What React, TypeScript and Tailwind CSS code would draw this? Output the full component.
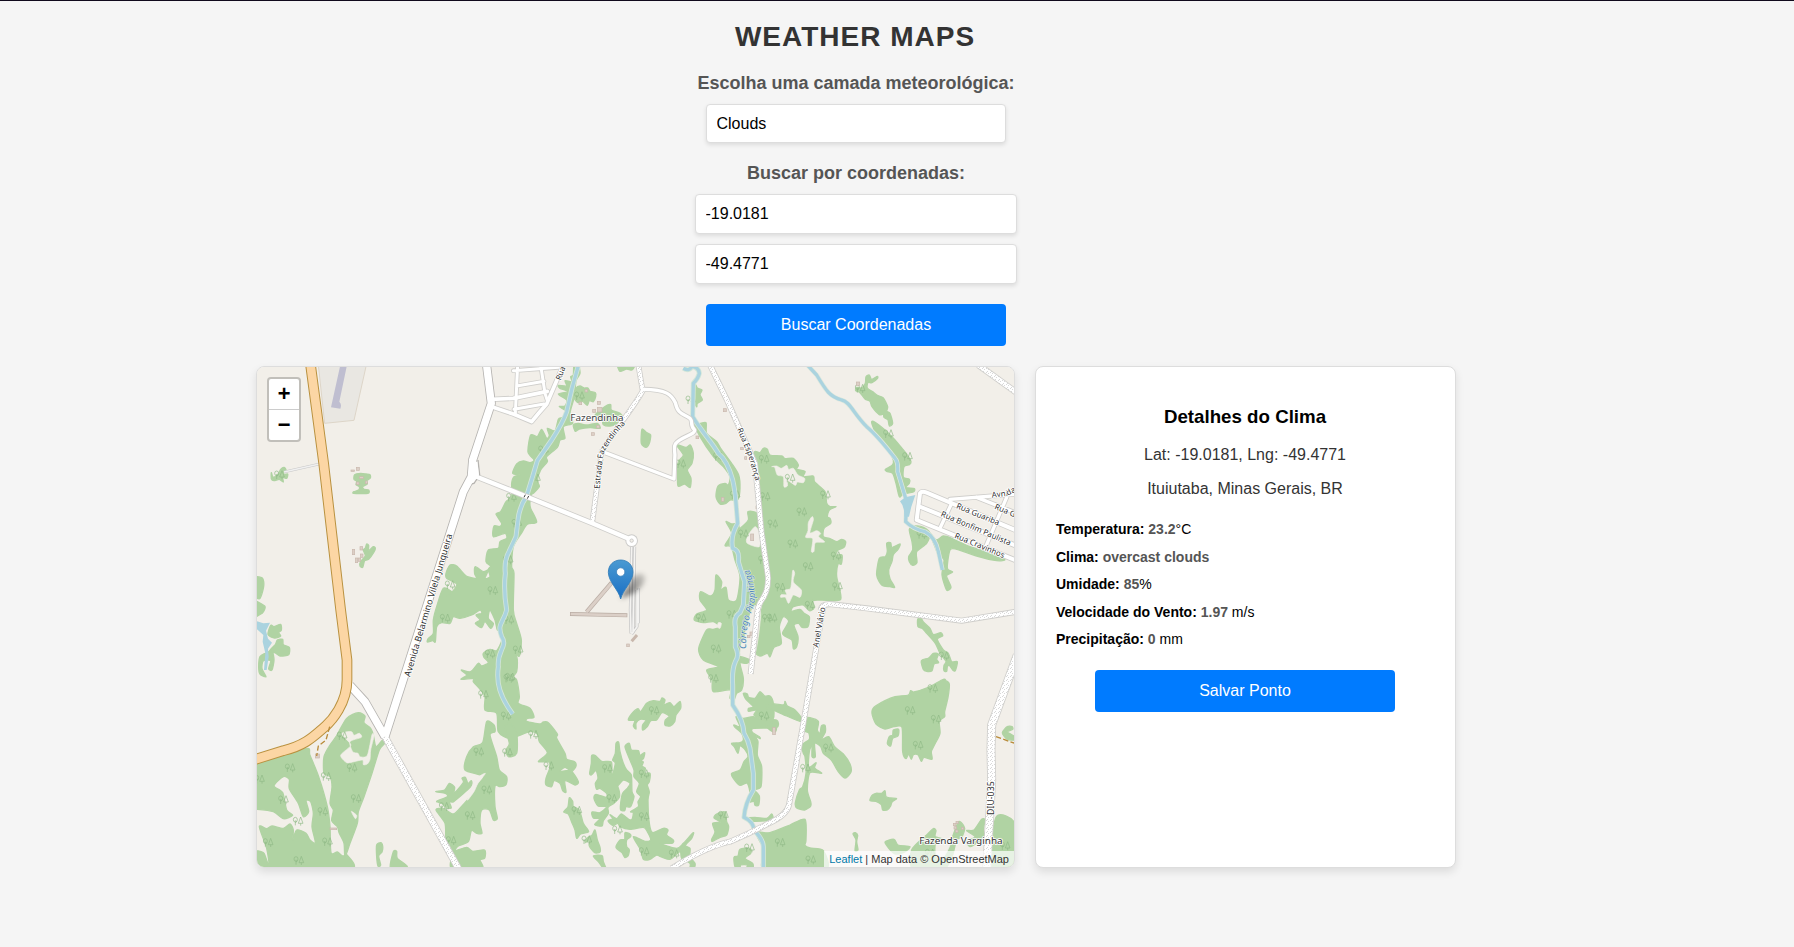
import React, { useState } from "react";

type Tile = { dx: number; dy: number; woods: string[]; gaps?: string[]; trees: string; houses?: string };

const TILES: Tile[] = [
  {
    dx: 0,
    dy: 0,
    woods: [
      "64,338 68,350 76,350 86,340 92,328 102,322 108,330 98,344 113,342 110,355 98,352 100,366 88,358 72,362 64,356",
      "314,344 332,340 348,342 360,344 361,354 350,362 352,372 338,380 342,388 356,390 354,400 311,400 312,395 326,390 328,380 318,374 320,364 312,358",
      "350,552 356,556 356,572 370,560 376,564 372,576 356,598 344,602 338,622 330,618 332,604 346,588 340,570 346,564",
      "10,655 35,653 41,665 40,685 30,715 22,715 10,720",
      "10,720 22,725 44,738 44,748 36,760 10,770",
    ],
    trees: "600,675 728,692 88,345",
    houses: "303,330,10,4 319,322,9,9 328,350,12,6 319,366,8,8 346,363,6,8 307,568,7,16 330,560,8,10 331,582,8,10 316,594,7,14 325,594,7,10",
  },
  {
    dx: 780,
    dy: 0,
    woods: [
      "325,14 372,14 366,30 350,27 330,34",
      "198,85 210,78 222,84 234,84 240,94 256,98 257,110 250,125 238,122 232,136 218,124 204,128 192,112",
      "190,195 205,190 230,195 262,190 270,205 240,203 208,207 196,214",
      "285,140 302,134 304,150 330,160 340,176 322,190 300,198 280,194 276,180 254,168",
      "396,208 410,218 422,225 418,250 408,262 394,250",
      "500,255 528,262 541,255 550,280 546,310 532,330 543,355 540,383 524,372 504,378 503,340 505,305 520,285",
      "556,75 562,84 576,90 570,104 577,120 562,130 560,140 552,120",
      "550,185 565,192 588,188 590,220 620,245 632,265 665,310 686,345 690,385 684,418 660,420 648,430 630,432 618,410 624,378 645,370 655,375 660,350 640,320 610,290 570,230",
      "648,485 665,492 684,490 690,505 715,480 714,455 745,465 750,550 765,620 774,695 750,722 735,750 718,760 722,800 705,830 690,855 690,910 700,955 695,990 680,1000 672,1020 660,1015 660,990 610,995 606,960 590,930 625,920 580,900 566,866 590,810 610,808 630,800 610,785 580,788 553,780 560,762 590,750 570,720 572,695 602,708 615,690 618,645 635,665 632,690 648,682 655,720 680,720 690,650 675,600 664,560 645,556 665,520",
    ],
    gaps: ["712,530 735,500 748,520 748,560 712,550", "730,740 705,830 735,880 752,760", "622,800 625,788 634,790 630,805"],
    trees: "100,270 20,490 208,108 76,355 512,312 625,290 675,405 762,298 765,410 700,522 760,600 -6,600 542,120 712,690 4,412",
    houses: "225,88,8,8 207,126,8,8 262,124,9,9 248,148,9,9 262,142,14,14 260,196,8,8 244,218,9,8 640,146,9,9 558,228,8,8 692,262,8,7 704,290,6,8 634,412,8,12 722,522,9,20 738,438,6,8",
  },
  {
    dx: 1560,
    dy: 0,
    woods: [
      "288,50 298,45 305,58 322,49 322,56 306,68 294,68 292,84 312,98 322,106 340,114 353,140 350,154 360,160 368,190 358,198 354,180 342,172 340,162 328,164 306,140 300,124 285,117 270,98 257,92 260,82 275,84 286,70",
      "305,188 314,186 345,210 375,240 396,265 412,285 423,305 418,314 402,320 400,352 418,358 418,370 408,382 433,386 430,396 400,402 388,410 378,370 368,340 350,334 346,328 366,316 370,300 350,265 322,230",
      "-48,280 -30,278 -20,265 -8,268 0,285 35,288 45,296 70,295 85,315 80,328 105,334 100,350 130,348 134,366 165,395 170,430 180,440 198,440 178,450 172,470 180,475 182,490 162,505 160,530 178,535 200,545 215,538 227,545 222,562 204,570 198,585 216,585 214,612 204,612 200,650 212,718 155,720 128,722 132,744 118,752 100,735 70,740 64,754 90,748 102,760 118,770 114,800 96,802 86,790 72,796 84,830 80,860 70,866 66,840 44,828 38,818 56,784 40,770 28,800 34,850 12,862 0,890 -8,880 -30,888 -46,870 -38,800 -16,710 -10,600 -24,500 -34,380",
      "350,550 362,548 366,562 390,552 384,568 370,584 366,604 356,630 360,656 374,682 360,680 336,676 320,645 328,595 346,590 352,574",
      "418,508 436,498 460,502 480,520 470,550 440,575 441,608 428,616 418,605 416,590 428,570 426,545",
      "480,520 500,540 520,528 545,535 600,560 650,575 704,598 680,602 620,588 560,568 540,570 532,625 548,636 530,646 534,660 543,682 530,690 516,645 522,600 505,585 495,560",
    ],
    gaps: [
      "5,320 14,322 22,345 40,350 42,380 52,378 54,362 76,376 82,366 100,368 104,355 84,345 70,325 56,328 50,316 34,325 20,318",
      "126,470 115,488 114,512 107,532 128,536 124,574 132,574 136,548 164,546 146,530 152,520 140,512 120,518 130,480",
      "68,632 74,640 70,666 94,690 90,712 70,705 56,730 46,712 32,712 34,704 50,704 46,690 62,684",
    ],
    trees: "95,456 8,492 68,552 198,588 114,620 30,682 455,524 270,86 60,355 166,405 412,290 355,222 120,736 202,680",
    houses: "259,66,10,10",
  },
  {
    dx: 0,
    dy: 750,
    woods: [
      "62,46 72,50 92,43 94,60 86,68 92,78 74,84 54,74",
      "76,104 82,90 98,88 100,104 118,112 116,134 90,138 74,128 52,134 62,118",
      "30,140 46,130 66,124 72,150 66,180 56,176 62,152 40,152 36,176 48,200 30,192 26,170",
      "10,468 90,440 172,415 180,436 206,500 232,590 240,650 243,728 262,726 278,738 292,736 298,780 10,780 10,725 40,728 48,745 58,770 50,715 28,650 50,656 66,648 100,655 120,642 130,660 128,690 140,660 168,670 180,690 196,698 186,650 190,610 182,575 168,572 176,605 160,620 145,580 118,536 118,508 100,500 72,528 98,548 110,600 128,616 100,626 70,605 20,598 10,600",
      "222,440 240,405 258,380 290,325 325,308 345,318 342,338 362,355 370,375 378,410 398,390 404,400 388,420 366,490 342,560 325,605 322,640 300,700 285,740 282,700 268,670 262,650 245,632 250,600 240,580 246,530 240,500 222,490",
      "380,705 392,698 398,708 396,726 386,738 392,765 384,768 380,740",
      "430,725 440,724 442,745 472,770 422,776",
      "557,545 584,540 598,520 614,532 612,550 640,518 636,505 646,502 654,520 664,512 662,530 612,574 598,575 604,594 588,592 576,580 560,574 592,560 586,550",
      "588,690 585,640 558,600 580,596 610,612 634,590 660,560 670,535 700,500 645,480 650,440 670,410 698,398 710,335 732,345 735,365 720,375 740,440 748,480 770,500 768,524 750,530 735,528 735,590 742,625 730,630 718,600 695,600 690,640 696,670 680,670 664,662 655,695 625,708 616,722 650,712 668,724 704,720 704,745 690,750 695,775 605,775 605,735",
      "765,352 780,340 800,370 800,430 775,440 768,420 778,400",
    ],
    gaps: [
      "275,372 292,365 306,366 312,376 328,370 334,382 300,395 308,425 324,430 330,440 352,436 366,374 372,378 362,420 360,448 352,462 340,464 338,450 312,455 290,458 272,436 300,410 300,400",
      "304,604 320,616 316,626",
      "652,570 672,545 684,520 706,490 676,510",
    ],
    trees: "585,25 120,474 306,474 318,566 218,605 54,698 146,752 276,378 720,132 700,254 686,426 710,540 660,617 603,692 768,318 232,696 582,590 772,428 100,570 144,634 28,508 228,500 776,205",
    houses: "196,432,12,12 240,654,20,5",
  },
  {
    dx: 780,
    dy: 750,
    woods: [
      "355,330 366,310 384,296 392,305 410,280 430,272 450,274 456,264 465,270 462,284 480,278 492,290 510,274 512,295 498,315 494,335 480,348 465,345 466,330 478,318 456,308 440,330 422,332 412,350 398,360 398,345 408,330 390,328 378,340 378,357 370,348 374,332",
      "245,437 256,437 275,454 304,456 306,490 318,500 322,525 328,545 328,562 312,580 294,592 295,610 280,632 276,648 254,644 270,626 250,624 246,606 270,608 290,590 264,588 252,565 258,553 288,562 290,550 270,535 260,538 256,520 264,505 258,482 244,495 239,490 244,460",
      "318,400 326,397 330,425 340,460 350,480 364,495 366,545 372,560 362,590 348,590 344,602 332,600 332,580 338,550 352,535 360,520 340,510 322,528 316,505 308,498 316,460 308,450 316,430",
      "345,410 358,400 364,420 385,422 390,436 404,428 400,446 392,450 400,456 396,468 406,475 404,490 420,490 418,515 412,525 418,546 414,570 418,640 428,668 460,655 474,660 470,675 490,690 486,700 450,700 500,715 520,700 550,668 545,685 526,706 540,715 540,740 555,760 552,775 540,775 540,760 515,745 510,725 480,748 452,740 440,735 420,748 400,748 392,720 370,680 405,694 422,690 412,665 400,652 360,658 330,650 324,640 308,646 294,632 308,626 300,614 320,626 334,612 356,628 366,628 370,608 362,605 385,590 384,575 392,560 380,545 388,520 372,500 372,480 360,450",
      "345,668 360,672 362,680 350,690 350,710 358,720 354,738 344,742 336,728 318,712 330,690 344,688",
      "178,563 188,574 190,590 208,600 220,640 236,665 212,672 200,685 195,660 185,636 175,612 161,606 174,590",
      "255,660 262,690 270,712 270,726 254,728 238,708 238,690 226,698 232,684 246,676",
      "250,738 276,737 280,755 288,775 280,775 265,755",
      "620,612 645,606 650,635 656,650 650,675 630,682 608,694 605,688 615,666 608,640 632,636 612,624",
      "700,250 712,252 716,262 736,264 750,245 764,258 780,258 790,280 790,325 760,328 732,315 740,300 716,304 716,295 730,290 708,268",
      "665,400 690,398 700,390 695,370 675,352 672,345 690,350 678,320 700,325 730,320 760,330 800,330 800,352 730,355 728,368 748,380 750,386 735,378 744,395 742,435 755,470 753,530 735,540 748,558 746,585 735,586 732,574 720,576 722,560 712,520 690,526 670,505 665,490 690,480 702,455 714,440 706,420 690,408 684,430 674,412",
      "710,625 735,622 770,625 785,612 785,630 720,634",
      "738,668 780,668 840,645 885,628 888,690 885,706 900,714 940,722 945,780 765,780 762,720",
      "672,742 684,738 690,718 720,715 722,730 705,745 728,760 728,775 710,775 712,765 692,765 690,775 675,770",
      "690,140 720,150 710,160 690,156",
    ],
    trees: "-4,30 24,120 70,374 116,468 432,302 292,476 305,566 402,492 402,620 402,725 618,117 610,206 573,24 665,14 762,318 640,616 718,714 492,732 200,602 322,660 772,25 0,202 230,690",
    houses: "350,102,8,8 720,66,8,10 712,76,8,7",
  },
  {
    dx: 1560,
    dy: 750,
    woods: [
      "443,28 452,22 460,36 480,55 490,74 512,68 518,78 502,88 520,120 535,130 545,155 562,155 556,182 548,180 538,166 532,170 530,184 522,182 522,166 528,154 510,130 496,100 470,70 458,56 444,50",
      "454,152 476,144 490,130 505,132 500,148 506,158 492,162 486,182 470,184 460,178",
      "520,208 528,212 538,222 534,262 524,305 524,320 508,334 510,370 496,400 484,425 486,448 462,442 454,454 444,434 430,434 424,448 416,432 408,446 398,425 396,352 372,350 345,357 318,342 306,310 312,292 345,272 375,260 415,255 422,242 432,246 475,232",
      "352,400 358,380 368,375 370,360 386,358 384,378 368,385 362,408",
      "-10,280 40,285 45,274 52,288 75,300 95,325 90,334 50,318 0,296 -10,298",
      "106,325 120,323 145,334 142,360 150,370 154,348 165,346 166,366 154,390 176,380 194,410 220,432 240,462 243,486 225,504 204,484 184,450 160,430 152,410 134,400 136,440 126,440 126,405 118,425 116,472 138,458 134,474 155,490 120,488 112,540 122,575 122,588 104,600 80,594 76,578 88,540 98,530 108,490 105,440 100,430 96,405 118,388 116,368 104,362",
      "300,572 306,556 318,550 335,550 345,542 348,560 362,564 380,566 366,576 362,588 352,600 338,600 334,584 318,574",
      "345,697 372,688 384,705 420,710 400,728 372,730",
      "425,720 470,675 490,656 498,662 496,680 525,695 525,780 430,780",
      "562,642 572,636 584,655 576,680 560,690 548,735 530,770 535,720",
      "590,662 612,660 635,628 645,630 640,660 648,690 620,700 600,710 590,694 615,680",
      "678,622 735,642 735,780 665,780",
      "697,368 712,350 726,350 728,358 712,366 735,380 735,390 712,388",
      "249,672 256,668 263,676 260,695 264,720 255,722 258,690",
      "-10,320 8,340 20,342 18,362 10,366 -10,350",
    ],
    gaps: ["500,700 530,694 540,705 518,745 500,740"],
    trees: "6,24 420,302 498,328 444,406 175,414 30,698 122,750 488,236 522,138 705,708 480,730 106,475",
    houses: "8,352,8,22 550,640,8,7 558,634,7,7 552,650,8,7 556,660,8,7 574,652,7,7",
  },
];

const RIVER_BANK_WOODS =
  "972,15 985,15 990,40 978,62 975,100 970,122 960,160 968,190 940,200 945,235 930,240 922,262 890,290 892,305 872,330 862,362 868,380 850,400 842,404 848,412 840,425 842,445 860,486 832,493 814,520 790,560 785,620 792,640 790,750 800,790 814,840 808,888 798,880 802,900 800,935 790,950 800,960 808,1010 805,1030 840,1045 852,1072 832,1075 830,1084 870,1092 880,1086 895,1088 922,1122 920,1135 945,1180 950,1198 973,1205 978,1218 965,1234 945,1222 930,1235 962,1232 985,1265 975,1275 945,1262 948,1296 938,1292 930,1270 912,1262 905,1280 888,1275 888,1255 900,1222 895,1205 865,1205 892,1178 868,1145 862,1122 840,1115 780,1135 745,1115 740,1060 705,1050 705,1010 692,990 670,965 672,955 633,958 650,945 634,930 662,935 685,910 695,918 715,908 702,892 700,880 720,868 740,872 756,840 754,815 742,810 735,780 720,750 715,775 730,790 722,805 705,785 695,803 676,790 690,780 678,765 695,760 690,750 665,765 630,775 610,770 600,790 575,788 560,800 556,845 548,842 532,846 535,835 550,820 550,780 560,740 580,685 605,695 605,705 590,710 610,692 620,672 590,655 588,640 600,615 620,618 640,640 652,650 680,655 674,642 676,620 700,635 715,630 705,655 720,650 715,628 722,618 708,605 715,570 745,565 750,545 770,535 765,520 730,530 732,498 748,500 755,490 738,462 752,455 768,425 785,410 785,370 792,350 810,345 788,340 800,312 820,303 840,308 852,300 834,276 842,225 862,230 875,208 890,235 898,226 892,205 915,212 925,178 938,172 950,155 928,140 945,138 950,120 925,102 955,95 930,85 925,76 950,78 945,62 965,65 962,50 970,45";

const DOTTED_ROADS: [string, number][] = [
  ["M405 1130L625 1525", 17],
  ["M1165 15L1178 92C1160 130 1080 230 1055 275L1027 485", 12],
  ["M1380 15L1430 118L1515 310L1535 520L1554 650Q1556 695 1532 725Q1523 740 1521 765L1512 850L1502 942", 13],
  ["M2185 15L2300 98", 15],
  ["M1712 750Q1716 730 1745 733L1850 745L2135 782L2300 755", 13],
  ["M1720 740L1660 1090L1617 1335Q1610 1365 1560 1388Q1500 1420 1440 1445Q1370 1460 1265 1525", 13],
  ["M2302 885L2225 1095L2223 1170L2225 1260L2210 1530", 22],
];

const WHITE_ROADS: [string, number][] = [
  ["M680 350L825 408L1025 489L1145 540", 13],
  ["M1180 88C1250 88 1265 105 1276 128C1284 165 1300 160 1320 175C1330 185 1318 195 1334 210C1336 225 1290 230 1276 252C1268 265 1278 270 1274 300L1272 357L1065 278", 10],
  ["M725 118L790 115L892 94M725 140L790 162L845 185Q865 160 890 132L940 15", 11],
  ["M803 15L796 160M872 15L885 100L892 122M790 32L925 22M800 78L882 64M792 148L882 132", 9],
  ["M2010 400L2000 480L2300 602M2010 400Q2015 392 2030 398L2300 512M2005 438L2300 558", 12],
  ["M2100 418L2300 402M2180 412L2300 460M2105 430L2072 500M2270 412L2205 565", 10],
];

const MAIN_ROADS = "M709 10L724 130L668 300L664 350L640 395L405 1130M300 976L345 1025L405 1130";
const TRUNK = "M181 10L221 310L272 750L291 900V960C291 1030 245 1082 225 1100C195 1125 170 1155 100 1172L10 1200";

const RIVERS = [
  "M987 10L966 85L950 155Q940 185 905 240L862 302Q845 360 830 408Q808 440 804 480L798 530L777 575Q762 600 766 640Q760 690 770 750C760 790 740 790 755 830C775 860 740 870 745 920C738 970 750 1010 788 1062",
  "M1300 25Q1318 35 1325 20Q1345 20 1348 40Q1345 55 1330 70L1328 170C1355 215 1385 245 1405 280C1430 300 1440 330 1448 360Q1455 390 1458 430L1463 490Q1440 530 1448 565Q1470 570 1465 605Q1475 640 1484 665L1480 735L1470 758Q1450 770 1456 800V860Q1470 885 1456 905Q1445 930 1448 975V1035Q1480 1080 1482 1120Q1495 1140 1500 1165L1510 1240L1510 1290Q1485 1330 1482 1372Q1510 1385 1512 1410Q1540 1440 1540 1460V1530",
];
const STREAM = "M1672 15L1700 45C1730 95 1740 110 1775 120C1800 125 1810 160 1850 200C1880 225 1900 250 1935 295Q1945 305 1943 335L1970 425L1967 485Q1990 508 2025 515Q2055 530 2065 575L2077 630";

const LABELS: { id: string; d: string; text: string; len: number; size: number }[] = [
  { id: "av", d: "M480 952L615 500", text: "Avenida Belarmino Vilela Junqueira", len: 446, size: 27 },
  { id: "est", d: "M1049 387Q1056 300 1062 278Q1080 240 1130 187", text: "Estrada Fazendinha", len: 219, size: 24 },
  { id: "esp", d: "M1461 208L1494 285L1520 375", text: "Rua Esperança", len: 165, size: 24 },
  { id: "rua", d: "M932 62L955 0", text: "Rua", len: 42, size: 24 },
  { id: "gua", d: "M2117 444L2260 503", text: "Rua Guariba", len: 138, size: 24 },
  { id: "bon", d: "M2071 468L2300 566", text: "Rua Bonfim Paulista", len: 226, size: 24 },
  { id: "cra", d: "M2112 533L2290 607", text: "Rua Cravinhos", len: 160, size: 24 },
  { id: "avn", d: "M2226 413L2272 408L2330 378", text: "Avnida", len: 76, size: 24 },
  { id: "rg", d: "M2232 446L2330 488", text: "Rua G", len: 66, size: 24 },
  { id: "anel", d: "M1705 863L1729 725", text: "Anel Viário", len: 122, size: 24 },
  { id: "diu", d: "M2233 1365V1240", text: "DIU-035", len: 101, size: 25 },
];

/** Closed curve that passes softly through every vertex of an outline. */
function smooth(points: string) {
  const p = points.split(" ").map((s) => s.split(",").map(Number));
  const n = p.length;
  const k = 0.13;
  let d = `M${p[0][0]} ${p[0][1]}`;
  for (let i = 0; i < n; i++) {
    const a = p[(i + n - 1) % n];
    const b = p[i];
    const c = p[(i + 1) % n];
    const e = p[(i + 2) % n];
    d += `C${b[0] + (c[0] - a[0]) * k} ${b[1] + (c[1] - a[1]) * k} ${c[0] - (e[0] - b[0]) * k} ${c[1] - (e[1] - b[1]) * k} ${c[0]} ${c[1]}`;
  }
  return d + "Z";
}

function Tree({ x, y }: { x: number; y: number }) {
  return (
    <path
      d={`M${x - 8} ${y + 12}V${y - 3}M${x - 8} ${y + 4}l5 -4M${x + 8} ${y + 13}V${y + 6}M${x + 8} ${y - 13}L${x + 1} ${y + 6}H${x + 15}ZM${x - 14} ${y - 5}a6 7 0 1 0 12 0a6 7 0 1 0 -12 0`}
      fill="none"
      stroke="#8fb987"
      strokeWidth="2"
    />
  );
}

function MapDrawing() {
  return (
    <svg viewBox="21 21 2271 1500" preserveAspectRatio="none" className="block h-full w-full" fontFamily="'Noto Sans', sans-serif">
      <defs>
        <pattern id="gravel" width="12" height="12" patternUnits="userSpaceOnUse">
          <rect width="12" height="12" fill="#fff" />
          <path d="M0 0h3v3h-3zM6 3h3v3h-3zM3 9h3v3h-3z" fill="#d9d9d9" />
        </pattern>
        <linearGradient id="pin" x1="0" y1="0" x2="0" y2="1">
          <stop offset="0" stopColor="#4a9ad2" />
          <stop offset="1" stopColor="#1a6fc4" />
        </linearGradient>
        <linearGradient id="fade" x1="0" y1="1" x2="1" y2="0">
          <stop offset="0" stopColor="#000" stopOpacity="0.6" />
          <stop offset="1" stopColor="#000" stopOpacity="0.15" />
        </linearGradient>
        <filter id="soft" x="-50%" y="-50%" width="200%" height="200%">
          <feGaussianBlur stdDeviation="8" />
        </filter>
        {LABELS.map((l) => (
          <path key={l.id} id={l.id} d={l.d} />
        ))}
        <path id="stream-name" d="M1488 867Q1486 790 1508 750Q1528 700 1488 600" />
      </defs>
      <rect width="2400" height="1600" fill="#f2efe9" />

      <path d="M205 15H349L312 181L224 190Z" fill="#e9e7e2" stroke="#ddd5c8" strokeWidth="3" />
      <path d="M271 15H291L268 125Q276 132 271 146L243 142Z" fill="#bfbed0" />

      <g fill="#b0d3a3" stroke="#b0d3a3" strokeWidth="4" strokeLinejoin="round">
        <path d={smooth(RIVER_BANK_WOODS)} />
        {TILES.map((t, i) => (
          <g key={i} transform={`translate(${t.dx} ${t.dy})`}>
            {t.woods.map((w) => (
              <path key={w} d={smooth(w)} />
            ))}
          </g>
        ))}
      </g>
      {TILES.map((t, i) => (
        <g key={i} transform={`translate(${t.dx} ${t.dy})`}>
          {(t.gaps ?? []).map((w) => (
            <path key={w} d={smooth(w)} fill="#f2efe9" stroke="#f2efe9" strokeWidth="2" strokeLinejoin="round" />
          ))}
          {t.trees.split(" ").map((p) => {
            const [x, y] = p.split(",").map(Number);
            return <Tree key={p} x={x} y={y} />;
          })}
          {(t.houses ?? "").split(" ").filter(Boolean).map((p) => {
            const [x, y, w, h] = p.split(",").map(Number);
            return <rect key={p} x={x} y={y} width={w} height={h} fill="#dccfc6" stroke="#c9b8ad" strokeWidth="2" />;
          })}
        </g>
      ))}

      <g fill="none" stroke="#aad3df" strokeLinejoin="round">
        {RIVERS.map((d) => (
          <path key={d} d={d} stroke="#d3e6d8" strokeWidth="15" />
        ))}
        {RIVERS.map((d) => (
          <path key={d} d={d} strokeWidth="10" />
        ))}
        <path d={STREAM} stroke="#e1e9dd" strokeWidth="14" />
        <path d={STREAM} strokeWidth="10" />
      </g>
      <g fill="#aad3df">
        <path d="M1950 424L1966 412L1996 405L1984 440L1977 470H1963Q1964 440 1950 424Z" />
        <path d="M18 783L40 790L60 788L48 812L54 836L66 848L54 866L56 890L50 930L42 930L46 880L38 845L40 825L18 805Z" />
      </g>

      <g fill="none" strokeLinejoin="round">
        <path d="M960 762L1132 766" stroke="#b9aca3" strokeWidth="12" />
        <path d="M1085 668L1010 756" stroke="#b9aca3" strokeWidth="13" />
        <path d="M962 762L1130 766" stroke="#dbcfc7" strokeWidth="8" />
        <path d="M1084 670L1010 756" stroke="#dbcfc7" strokeWidth="9" />
        <path d="M1145 560L1141 750L1143 820M1161 690V800L1145 822M1154 560L1149 820M1165 685V790" stroke="#c4c4c4" strokeWidth="9" />
        <path d="M1145 560L1141 750L1143 820M1161 690V800L1145 822M1154 560L1149 820M1165 685V790" stroke="#f4f3f1" strokeWidth="5" />
        <path d="M1145 844L1161 825" stroke="#c9b8ad" strokeWidth="9" />
        <path d="M102 336L208 312" stroke="#c8c8c8" strokeWidth="8" />
        <path d="M102 336L208 312" stroke="#f0f0f0" strokeWidth="4" />
        {DOTTED_ROADS.map(([d, w]) => (
          <path key={d} d={d} stroke="#cfcecb" strokeWidth={w + 5} />
        ))}
        {WHITE_ROADS.map(([d, w]) => (
          <path key={d} d={d} stroke="#cfcecb" strokeWidth={w + 5} strokeLinecap="round" />
        ))}
        <path d={MAIN_ROADS} stroke="#b5b3b0" strokeWidth="27" />
        <path d="M684 300L689 345L672 370L650 375" stroke="#b5b3b0" strokeWidth="4" />
        <circle cx="1145" cy="542" r="19" fill="#cdccca" />
        {DOTTED_ROADS.map(([d, w]) => (
          <path key={d} d={d} stroke="url(#gravel)" strokeWidth={w} />
        ))}
        {WHITE_ROADS.map(([d, w]) => (
          <path key={d} d={d} stroke="#fff" strokeWidth={w} strokeLinecap="round" />
        ))}
        <path d={MAIN_ROADS} stroke="#fff" strokeWidth="22" />
        <path d="M672 305L682 305L687 345L670 368L650 375L655 345Z" fill="#fff" />
        <circle cx="1145" cy="542" r="16" fill="#fff" />
        <circle cx="1145" cy="542" r="5" fill="#f2efe9" stroke="#cdccca" strokeWidth="3" />
        <path d="M822 412l4 -8M832 416l4 -8" stroke="#444" strokeWidth="3" />
        <path d={TRUNK} stroke="#b9913f" strokeWidth="32" />
        <path d={TRUNK} stroke="#fcd6a4" strokeWidth="26" />
        <path d="M239 1100L228 1140L205 1158L200 1188M2238 1130L2300 1152" stroke="#b98b3a" strokeWidth="4" strokeDasharray="16 7" />
      </g>

      <g fill="#2f2f2f" stroke="#fff" strokeWidth="5" strokeLinejoin="round" paintOrder="stroke">
        {LABELS.map((l) => (
          <text key={l.id} fontSize={l.size} textLength={l.len} lengthAdjust="spacingAndGlyphs">
            <textPath href={`#${l.id}`} textLength={l.len} lengthAdjust="spacingAndGlyphs">
              {l.text}
            </textPath>
          </text>
        ))}
        <text x="961" y="182" fontSize="29" textLength="160" lengthAdjust="spacingAndGlyphs" fill="#444">
          Fazendinha
        </text>
        <text x="2008" y="1451" fontSize="29" textLength="250" lengthAdjust="spacingAndGlyphs" fill="#333">
          Fazenda Varginha
        </text>
      </g>
      <text fontSize="28" fontStyle="italic" fill="#4f86bb" stroke="#e4efe2" strokeWidth="3" paintOrder="stroke">
        <textPath href="#stream-name">Córrego Pirapitinga</textPath>
      </text>

      <path d="M1112 716L1145 655Q1170 632 1184 648Q1190 672 1150 700Z" fill="url(#fade)" filter="url(#soft)" />
      <path
        d="M1112 717C1106 690 1075 665 1075 637C1075 615 1091 600 1112 600S1149 615 1149 637C1149 665 1118 690 1112 717Z"
        fill="url(#pin)"
        stroke="#2f7cb8"
        strokeWidth="2.5"
      />
      <circle cx="1112" cy="636" r="12.5" fill="#fff" stroke="#3379b3" strokeWidth="2" />
    </svg>
  );
}

function Row({ label, value, unit }: { label: string; value: string; unit?: string }) {
  return (
    <p className="h-4 text-sm leading-4">
      <strong>{label}</strong> <strong className="text-[#555]">{value}</strong>
      {unit}
    </p>
  );
}

const FIELD = "block rounded border border-[#ddd] bg-white pr-[9px] pl-[9.5px] text-base text-black shadow-[0_2px_4px_rgba(0,0,0,0.1)] outline-none";
const BUTTON = "block h-[42px] w-[300px] rounded bg-[#007bff] text-base text-white";

export default function App() {
  const [lat, setLat] = useState("-19.0181");
  const [lng, setLng] = useState("-49.4771");

  return (
    <div className="min-h-[947px] border-t border-[#100a1c] bg-[#f5f5f5] font-['Liberation_Sans',Arial,sans-serif] text-black">
      <main className="ml-64 flex w-[1200px] flex-col items-center pt-5">
        <h1 className="mr-[2px] text-[28px] leading-8 font-bold tracking-[1px] text-[#333]">WEATHER MAPS</h1>
        <label className="mt-5 text-[18px] leading-5 font-bold text-[#555]">Escolha uma camada meteorológica:</label>
        <select className={`${FIELD} mt-[11px] h-[39px] w-[300px] appearance-none`} defaultValue="Clouds">
          <option>Clouds</option>
        </select>
        <label className="mt-5 text-[18px] leading-5 font-bold text-[#555]">Buscar por coordenadas:</label>
        <input className={`${FIELD} mt-[11px] h-10 w-[322px]`} value={lat} onChange={(e) => setLat(e.target.value)} />
        <input className={`${FIELD} mt-[10px] h-10 w-[322px]`} value={lng} onChange={(e) => setLng(e.target.value)} />
        <button className={`${BUTTON} mt-5`}>Buscar Coordenadas</button>

        <div className="mt-5 flex h-[502px] w-full gap-5">
          <section className="relative w-[759px] overflow-hidden rounded-lg border border-[#ddd] shadow-[0_4px_8px_rgba(0,0,0,0.1)]">
            <MapDrawing />
            <div className="absolute top-[10px] left-[10px] flex w-[34px] flex-col overflow-hidden rounded border-2 border-black/20 bg-white bg-clip-padding text-center font-['Liberation_Mono',monospace] text-[22px] font-bold">
              <button className="h-[31px] border-b border-[#ccc] pt-[3px] leading-[28px]">+</button>
              <button className="h-[30px] pt-[3px] leading-[28px]">−</button>
            </div>
            <div className="absolute right-0 bottom-0 h-4 bg-white/70 px-[5px] text-[11px] leading-4 whitespace-nowrap text-[#333]">
              <a className="text-[#0078a8]">Leaflet</a> | Map data © OpenStreetMap
            </div>
          </section>

          <section className="flex w-[421px] flex-col items-center rounded-lg border border-[#ddd] bg-white pt-[39px] pr-[21px] pl-5 shadow-[0_4px_8px_rgba(0,0,0,0.1)]">
            <h3 className="text-[18.72px] leading-[22px] font-bold">Detalhes do Clima</h3>
            <p className="mt-[18px] text-base leading-[18px] text-[#333]">Lat: -19.0181, Lng: -49.4771</p>
            <p className="mt-4 text-base leading-[18px] text-[#333]">Ituiutaba, Minas Gerais, BR</p>
            <div className="mt-[23px] flex w-full flex-col gap-[11.5px]">
              <Row label="Temperatura:" value="23.2" unit="°C" />
              <Row label="Clima:" value="overcast clouds" />
              <Row label="Umidade:" value="85" unit="%" />
              <Row label="Velocidade do Vento:" value="1.97" unit=" m/s" />
              <Row label="Precipitação:" value="0" unit=" mm" />
            </div>
            <button className={`${BUTTON} mt-[23px]`}>Salvar Ponto</button>
          </section>
        </div>
      </main>
    </div>
  );
}
